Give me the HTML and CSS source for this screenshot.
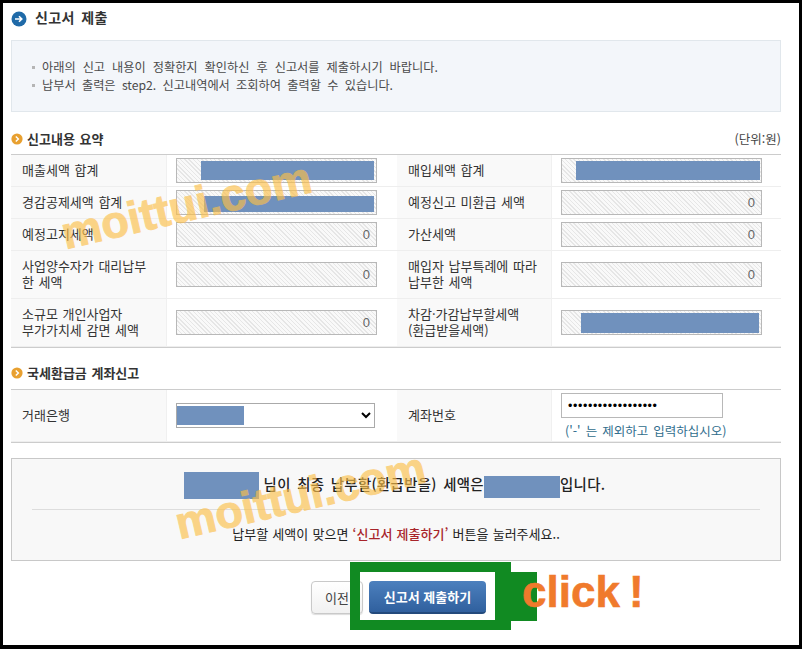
FILE: index.html
```html
<!DOCTYPE html>
<html lang="ko">
<head>
<meta charset="utf-8">
<title>신고서 제출</title>
<link rel="stylesheet" href="styles.css">
</head>
<body>
<div class="frame">
  <header class="page-title">
    <svg class="title-icon" viewBox="0 0 16 16" width="16" height="16"><circle cx="8" cy="8" r="7.5" fill="#1f6aa8"/><path d="M4 8h6.5M8 5.2 10.8 8 8 10.8" fill="none" stroke="#fff" stroke-width="1.6"/></svg>
    <h1>신고서 제출</h1>
  </header>

  <section class="notice">
    <p class="notice-line">아래의 신고 내용이 정확한지 확인하신 후 신고서를 제출하시기 바랍니다.</p>
    <p class="notice-line second-line">납부서 출력은 step2. 신고내역에서 조회하여 출력할 수 있습니다.</p>
  </section>

  <div class="section-head first">
    <svg class="sec-icon" viewBox="0 0 12 12" width="12" height="12"><circle cx="6" cy="6" r="5.6" fill="#e8a030"/><path d="M4.8 3.4 7.4 6 4.8 8.6" fill="none" stroke="#fff" stroke-width="1.4"/></svg>
    <h2>신고내용 요약</h2>
    <span class="unit">(단위:원)</span>
  </div>

  <div class="grid summary">
    <div class="label">매출세액 합계</div>
    <div class="value"><div class="field"><input class="ro" readonly><span class="mask m1"></span></div></div>
    <div class="label">매입세액 합계</div>
    <div class="value"><div class="field"><input class="ro" readonly><span class="mask m2"></span></div></div>

    <div class="label">경감공제세액 합계</div>
    <div class="value"><div class="field"><input class="ro" readonly><span class="mask m3"></span></div></div>
    <div class="label">예정신고 미환급 세액</div>
    <div class="value"><div class="field"><input class="ro" readonly value="0"></div></div>

    <div class="label">예정고지세액</div>
    <div class="value"><div class="field"><input class="ro" readonly value="0"></div></div>
    <div class="label">가산세액</div>
    <div class="value"><div class="field"><input class="ro" readonly value="0"></div></div>

    <div class="label">사업양수자가 대리납부<br>한 세액</div>
    <div class="value"><div class="field"><input class="ro" readonly value="0"></div></div>
    <div class="label">매입자 납부특례에 따라<br>납부한 세액</div>
    <div class="value"><div class="field"><input class="ro" readonly value="0"></div></div>

    <div class="label">소규모 개인사업자<br>부가가치세 감면 세액</div>
    <div class="value"><div class="field"><input class="ro" readonly value="0"></div></div>
    <div class="label">차감·가감납부할세액<br>(환급받을세액)</div>
    <div class="value"><div class="field"><input class="ro" readonly><span class="mask m4"></span></div></div>
  </div>

  <div class="section-head second">
    <svg class="sec-icon" viewBox="0 0 12 12" width="12" height="12"><circle cx="6" cy="6" r="5.6" fill="#e8a030"/><path d="M4.8 3.4 7.4 6 4.8 8.6" fill="none" stroke="#fff" stroke-width="1.4"/></svg>
    <h2>국세환급금 계좌신고</h2>
  </div>

  <div class="grid account">
    <div class="label">거래은행</div>
    <div class="value"><div class="field"><select class="bank"><option></option></select><span class="mask m5"></span></div></div>
    <div class="label">계좌번호</div>
    <div class="value stack">
      <input class="acct" type="password" value="000000000000000000">
      <span class="hint">('-' 는 제외하고 입력하십시오)</span>
    </div>
  </div>

  <section class="result">
    <div class="result-main">
      <span class="hide-a"></span><span class="rt">님이 최종 납부할(환급받을) 세액은</span><span class="hide-b"></span><span class="rt">입니다.</span>
    </div>
    <hr class="result-rule">
    <p class="result-sub">납부할 세액이 맞으면 <em>‘신고서 제출하기’</em> 버튼을 눌러주세요..</p>
  </section>

  <div class="actions">
    <button class="btn prev">이전</button>
    <button class="btn submit">신고서 제출하기</button>
  </div>

  <div class="mark mark-a">moittui.com</div>
  <div class="mark mark-b">moittui.com</div>
  <div class="callout-tab"></div>
  <div class="callout-box"></div>
  <div class="click">click !</div>
</div>
</body>
</html>
```
FILE: styles.css
```css
* { box-sizing: border-box; }
html, body { margin: 0; padding: 0; background: #fff; }
body { font-family: "Noto Sans CJK KR", "Liberation Sans", sans-serif; font-size: 13px; color: #333; }
h1, h2, p { margin: 0; }

.frame {
  position: relative;
  width: 802px;
  height: 649px;
  border: solid #000;
  border-width: 3px 3px 4px 3px;
  padding: 8px 18px 0 8px;
  overflow: hidden;
  background: #fff;
}

.page-title { display: flex; align-items: center; gap: 8px; height: 15px; margin-bottom: 14px; }
.title-icon { flex: none; }
.page-title h1 { font-size: 14px; font-weight: 700; color: #333; word-spacing: 2px; line-height: 15px; letter-spacing: .4px; margin-bottom: 2px; }

.notice {
  height: 72px;
  padding: 17px 0 0 20px;
  background: #f3f6fa;
  border: 1px solid #e1e7ec;
}
.notice-line { position: relative; line-height: 18px; padding-left: 10px; color: #4a4a4a; font-size: 12.2px; word-spacing: 3.6px; }
.notice-line.second-line { word-spacing: 2.9px; }
.notice-line::before { content: ""; position: absolute; left: 0; top: 8px; width: 3px; height: 3px; background: #b5b5b5; }

.section-head { display: flex; align-items: center; height: 16px; gap: 4px; }
.section-head.first { margin: 20px 0 6px; }
.section-head.second { margin: 18px 0 7px; }
.sec-icon { flex: none; margin-bottom: 3px; }
.section-head h2 { font-size: 13px; font-weight: 700; color: #333; word-spacing: 1px; margin-bottom: 4px; }
.unit { margin-left: auto; font-size: 12.5px; color: #444; margin-bottom: 4px; }

.grid {
  display: grid;
  grid-template-columns: 155px 231px 154px 230px;
  border-top: 1px solid #ccc;
}
.summary { grid-template-rows: 32px 32px 32px 48px 48px; border-bottom: 1px solid #ccc; }
.account { grid-template-rows: 52px; border-bottom: 1px solid #ccc; }
.account > * { border-bottom: 0; }

.label {
  display: flex;
  align-items: center;
  padding: 0 0 2px 11px;
  background: #f9f9f9;
  border-bottom: 1px solid #eee;
  line-height: 16px;
  color: #333;
  word-spacing: 1px;
}
.value {
  display: flex;
  align-items: center;
  padding-left: 9px;
  border-left: 1px solid #f0f0f0;
  border-bottom: 1px solid #eee;
}
.field { position: relative; width: 201px; height: 25px; }
.ro {
  display: block;
  width: 201px;
  height: 25px;
  padding: 0 6px 0 0;
  text-align: right;
  border: 1px solid #b8b8b8;
  border-radius: 0;
  outline: 0;
  font: 13px "Liberation Sans", sans-serif;
  color: #666;
  background: repeating-linear-gradient(45deg, #e6e6e6 0 1px, #f9f9f9 1px 3px);
}
.mask { position: absolute; display: block; background: #7091bd; }
.m1 { left: 25px; top: 3px; width: 173px; height: 19px; }
.m2 { left: 15px; top: 3px; width: 184px; height: 19px; }
.m3 { left: 28px; top: 6px; width: 170px; height: 16px; }
.m4 { left: 20px; top: 3px; width: 178px; height: 20px; }
.m5 { left: 1px; top: 3px; width: 67px; height: 19px; }

.bank { display: block; width: 199px; height: 25px; border: 1px solid #aaa; border-radius: 0; background: #fff; font: 13px "Liberation Sans", sans-serif; }

.stack { flex-direction: column; align-items: flex-start; padding-top: 3px; }
.acct { display: block; flex: none; width: 162px; height: 25px; padding: 0 6px; border: 1px solid #b8b8b8; border-radius: 0; outline: 0; font: 12.5px "Liberation Sans", sans-serif; letter-spacing: .6px; color: #000; background: #fff; }
.hint { margin: 5px 0 0 4px; font-size: 12.5px; line-height: 16px; color: #2f6d8c; word-spacing: 1.6px; }

.result {
  height: 103px;
  margin-top: 15px;
  padding: 13px 20px 0;
  background: #f8f8f8;
  border: 1px solid #c8c8c8;
}
.result-main { display: flex; align-items: center; justify-content: center; height: 27px; padding-right: 3px; font-size: 14.4px; font-weight: 500; color: #222; word-spacing: 2px; letter-spacing: .35px; }
.rt { margin-bottom: 4px; }
.hide-a { width: 75px; height: 27px; margin-right: 5px; background: #7091bd; }
.hide-b { width: 76px; height: 22px; margin-top: 3px; background: #7091bd; }
.result-rule { height: 1px; margin: 10px 0 0; border: 0; background: #ddd; }
.result-sub { margin-top: 14px; text-align: center; font-size: 13px; line-height: 20px; color: #222; word-spacing: .6px; }
.result-sub em { font-style: normal; font-weight: 500; color: #a8242a; }

.actions { display: flex; justify-content: center; gap: 6px; margin-top: 20px; padding-left: 5px; }
.btn { height: 33px; border-radius: 4px; font-family: inherit; font-size: 13px; padding: 0; }
.prev { width: 52px; color: #444; border: 1px solid #c9c9c9; background: linear-gradient(#fff, #f1f1f1); box-shadow: 0 1px 1px #ddd; }
.submit { width: 117px; color: #fff; font-weight: 700; border: 0; border-bottom: 2px solid #234a7c; background: linear-gradient(#4c80be, #30609e); }

.mark {
  position: absolute;
  font: 700 45px/1 "Liberation Sans", sans-serif;
  color: #fcc04a;
  -webkit-text-stroke: 1px #fcc04a;
  opacity: .65;
  transform: rotate(-13deg);
  transform-origin: left bottom;
  white-space: nowrap;
  pointer-events: none;
}
.mark-a { left: 64px; top: 208px; }
.mark-b { left: 178px; top: 498px; }

.callout-box { position: absolute; left: 347px; top: 559px; width: 161px; height: 68px; border: solid #118a22; border-width: 10px 16px 10px 10px; }
.callout-tab { position: absolute; left: 508px; top: 569px; width: 26px; height: 49px; background: #118a22; }
.click {
  position: absolute;
  left: 519px;
  top: 567px;
  font: 700 44px/1 "Liberation Sans", sans-serif;
  color: #f07a2c;
  -webkit-text-stroke: .6px #f07a2c;
  word-spacing: -3px;
  white-space: nowrap;
}
```
